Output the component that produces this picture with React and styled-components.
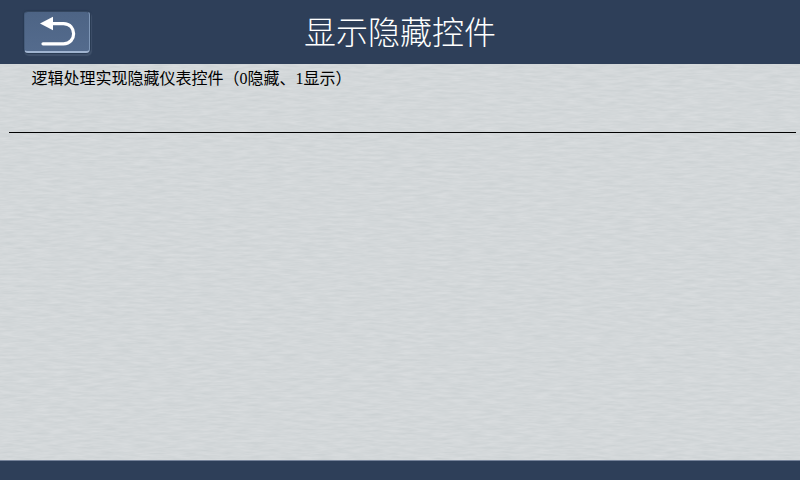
import React from "react";
import styled, { createGlobalStyle } from "styled-components";

const brushed = encodeURIComponent(
  `<svg xmlns="http://www.w3.org/2000/svg" width="800" height="398"><filter id="b" x="0" y="0" width="100%" height="100%" color-interpolation-filters="sRGB"><feTurbulence type="fractalNoise" baseFrequency="0.06 0.42" numOctaves="3" seed="7"/><feColorMatrix values="0.07 0 0 0 0.793  0.06 0 0 0 0.815  0.06 0 0 0 0.823  0 0 0 0 1"/></filter><rect width="800" height="398" filter="url(#b)"/></svg>`
);

const GlobalStyle = createGlobalStyle`
  * { box-sizing: border-box; }
  body { margin: 0; overflow: hidden; }
`;

const Screen = styled.div`
  width: 800px;
  height: 480px;
  display: flex;
  flex-direction: column;
  background: #2e3f59;
  font-family: "Liberation Serif", "Noto Sans CJK SC", sans-serif;
`;

const Header = styled.header`
  height: 64px;
  flex: none;
  display: grid;
  grid-template-columns: 100px 1fr 100px;
  align-items: center;
  background: #2e3f59;
`;

const BackButton = styled.button`
  width: 66px;
  height: 42px;
  margin: 0 0 0 24px;
  padding: 0;
  display: block;
  border: 1px solid #465c7b;
  border-top-color: #34465f;
  border-right-color: #8098b8;
  border-bottom: 2px solid #a0b4d0;
  border-radius: 4px;
  background: linear-gradient(#4d6485, #546b8d);
  box-shadow: 0 0 1px 1px #293a53, 1px 2px 1px 1px #42536c;
`;

const Title = styled.h1`
  margin: 0;
  text-align: center;
  color: #fff;
  font-size: 32px;
  font-weight: 300;
  line-height: 66px;
  height: 64px;
`;

const Panel = styled.main`
  flex: 1;
  display: flex;
  flex-direction: column;
  background: #d1d6d8 url("data:image/svg+xml,${brushed}");
`;

const Description = styled.p`
  margin: 0;
  padding: 3px 0 0 31.5px;
  height: 68px;
  color: #000;
  font-size: 16px;
  font-weight: 400;
  line-height: 24px;
  white-space: nowrap;
`;

const Divider = styled.hr`
  width: 787px;
  height: 1px;
  margin: 0 0 0 9px;
  border: 0;
  background: #000;
`;

const Footer = styled.footer`
  height: 20px;
  flex: none;
  border-top: 1px solid #76839a;
  background: #2e3f59;
`;

const BackIcon = () => (
  <svg width="64" height="39" viewBox="25 12 64 39" display="block" aria-hidden="true">
    <path d="M52 23.6H63.5C77 23.6 77 43.8 63.5 43.8H43" fill="none" stroke="#fff" strokeWidth="3.2" strokeLinecap="round" />
    <path d="M40 23.5L53 16.8V30.3Z" fill="#fff" />
  </svg>
);

export default function App() {
  return (
    <>
      <GlobalStyle />
      <Screen>
        <Header>
          <BackButton type="button" aria-label="返回">
            <BackIcon />
          </BackButton>
          <Title>显示隐藏控件</Title>
        </Header>
        <Panel>
          <Description>逻辑处理实现隐藏仪表控件（0隐藏、1显示）</Description>
          <Divider />
        </Panel>
        <Footer />
      </Screen>
    </>
  );
}
